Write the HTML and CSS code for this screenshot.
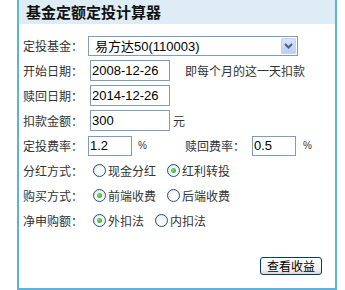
FILE: index.html
```html
<!DOCTYPE html>
<html lang="zh">
<head>
<meta charset="utf-8">
<title>基金定额定投计算器</title>
<link rel="stylesheet" href="styles.css">
</head>
<body>
<div class="calc">
  <div class="calc-head">基金定额定投计算器</div>
  <div class="calc-body">
    <div class="row">
      <span class="lbl">定投基金：</span>
      <div class="sel">
        <span class="sel-text">易方达50(110003)</span>
        <span class="sel-btn"><svg width="9" height="6" viewBox="0 0 9 6"><path d="M1 1 L4.5 4.5 L8 1" fill="none" stroke="#4a5f86" stroke-width="2"/></svg></span>
      </div>
    </div>
    <div class="row">
      <span class="lbl">开始日期：</span>
      <span class="inp inp-date">2008-12-26</span>
      <span class="note">即每个月的这一天扣款</span>
    </div>
    <div class="row">
      <span class="lbl">赎回日期：</span>
      <span class="inp inp-date">2014-12-26</span>
    </div>
    <div class="row">
      <span class="lbl">扣款金额：</span>
      <span class="inp inp-date">300</span>
      <span class="unit">元</span>
    </div>
    <div class="row">
      <span class="lbl">定投费率：</span>
      <span class="inp inp-rate">1.2</span>
      <span class="pct">%</span>
      <span class="lbl2">赎回费率：</span>
      <span class="inp inp-rate2">0.5</span>
      <span class="pct pct2">%</span>
    </div>
    <div class="row">
      <span class="lbl">分红方式：</span>
      <span class="opt"><span class="radio"></span>现金分红</span>
      <span class="opt"><span class="radio on"></span>红利转投</span>
    </div>
    <div class="row">
      <span class="lbl">购买方式：</span>
      <span class="opt"><span class="radio on"></span>前端收费</span>
      <span class="opt"><span class="radio"></span>后端收费</span>
    </div>
    <div class="row">
      <span class="lbl">净申购额：</span>
      <span class="opt"><span class="radio on"></span>外扣法</span>
      <span class="opt"><span class="radio"></span>内扣法</span>
    </div>
    <div class="actions">
      <button class="btn" type="button">查看收益</button>
    </div>
  </div>
</div>
</body>
</html>
```
FILE: styles.css
```css
html, body {
  margin: 0;
  padding: 0;
  background: #fff;
}
body {
  font-family: "Liberation Sans", "Noto Sans CJK SC", sans-serif;
  font-size: 12px;
  color: #333;
}
.calc {
  margin-left: 17px;
  width: 316px;
  height: 288px;
  border: 2px solid #5ab4db;
  border-top: none;
}
.calc-head {
  height: 24px;
  line-height: 24px;
  background: #deedf5;
  padding-left: 7px;
  font-family: "Noto Sans CJK SC", sans-serif;
  font-weight: bold;
  font-size: 15px;
  color: #111;
}
.calc-body {
  padding-top: 9px;
  padding-left: 4px;
}
.row {
  display: flex;
  align-items: center;
  height: 25px;
}
.lbl {
  width: 65px;
  flex: none;
  font-family: "Noto Sans CJK SC", sans-serif;
  white-space: nowrap;
}
.sel {
  display: flex;
  align-items: center;
  width: 208px;
  height: 18px;
  border: 1px solid #7f9db9;
  background: #fff;
}
.sel-text {
  flex: 1;
  padding-left: 6px;
  font-size: 13px;
  color: #000;
  font-family: "Liberation Sans", "Noto Sans CJK SC", sans-serif;
}
.sel-btn {
  display: flex;
  align-items: center;
  justify-content: center;
  width: 15px;
  height: 16px;
  margin-right: 1px;
  border-radius: 2px;
  background: linear-gradient(#d8e4fc, #b8ccf6);
  box-shadow: inset 0 0 0 1px #c3d3f8;
}
.inp {
  display: flex;
  align-items: center;
  flex: none;
  box-sizing: border-box;
  border: 1px solid #7f9db9;
  background: #fff;
  padding-left: 1px;
  font-size: 13px;
  color: #000;
}
.inp-date {
  width: 80px;
  height: 21px;
  margin-left: 2px;
}
.inp-rate {
  width: 44px;
  height: 20px;
}
.inp-rate2 {
  width: 44px;
  height: 20px;
  margin-left: 7px;
}
.note {
  margin-left: 15px;
  font-family: "Noto Sans CJK SC", sans-serif;
  white-space: nowrap;
}
.unit {
  margin-left: 3px;
  font-family: "Noto Sans CJK SC", sans-serif;
}
.pct {
  flex: none;
  margin-left: 6px;
  font-size: 10px;
  width: 47px;
}
.pct2 {
  margin-left: 7px;
  width: auto;
}
.lbl2 {
  flex: none;
  white-space: nowrap;
  font-family: "Noto Sans CJK SC", sans-serif;
}
.opt {
  display: flex;
  align-items: center;
  flex: none;
  margin-right: 11px;
  white-space: nowrap;
  font-family: "Noto Sans CJK SC", sans-serif;
}
.lbl + .opt {
  margin-left: 5px;
}
.radio {
  box-sizing: border-box;
  width: 13px;
  height: 13px;
  margin-right: 2px;
  border: 1px solid #1c5180;
  border-radius: 50%;
  background: radial-gradient(circle at 60% 65%, #fff 30%, #dcdcd6 100%);
  display: flex;
  align-items: center;
  justify-content: center;
}
.radio.on::after {
  content: "";
  width: 5px;
  height: 5px;
  border-radius: 50%;
  background: radial-gradient(circle at 40% 40%, #6ee36e, #21a121);
}
.actions {
  display: flex;
  justify-content: flex-end;
  padding-right: 13px;
  margin-top: 24px;
}
.btn {
  box-sizing: border-box;
  width: 62px;
  height: 18px;
  padding: 0;
  border: 1px solid #003c74;
  border-radius: 3px;
  background: linear-gradient(#ffffff, #f4f4f0 70%, #dcd8cc);
  font-family: "Noto Sans CJK SC", sans-serif;
  font-size: 12px;
  line-height: 16px;
  color: #000;
}
```
